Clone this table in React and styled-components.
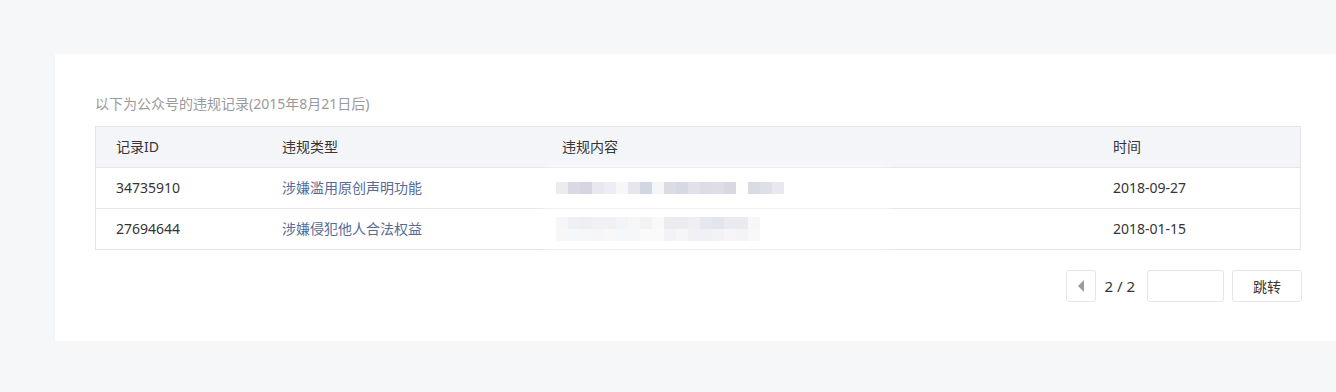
import React from "react";
import styled, { createGlobalStyle } from "styled-components";

const Global = createGlobalStyle`
  html, body { margin: 0; padding: 0; background: #f6f7f9; overflow: hidden; }
  body { font-family: "Noto Sans", "Noto Sans CJK SC", sans-serif; font-size: 14px; color: #353535; }
`;

const Page = styled.div`
  padding: 54px 0 0 55px;
`;

const Card = styled.section`
  background: #fff;
  box-shadow: 0 1px 2px rgba(0, 0, 0, 0.04);
  padding: 39px 0 39px 40px;
`;

const Title = styled.div`
  color: #9a9a9a;
  line-height: 20px;
  margin-bottom: 13px;
  padding-top: 1px;
`;

const Table = styled.div`
  width: 1206px;
  box-sizing: border-box;
  border: 1px solid #e4e6eb;
  position: relative;
  margin-top: -1px;
`;

const Row = styled.div`
  display: grid;
  grid-template-columns: 166px 280px 551px 1fr;
  height: 40px;
  align-items: center;
  background: ${(p) => (p.$head ? "#f4f5f9" : "#fff")};
  & + & { border-top: 1px solid #e4e6eb; }
`;

const Cell = styled.div`
  padding-left: 20px;
  line-height: 20px;
  color: ${(p) => (p.$link ? "#576b95" : "#353535")};
  white-space: nowrap;
`;

const Mosaic = styled.div`
  display: flex;
  flex-direction: column;
  margin-left: -6px;
`;

const MosaicLine = styled.div`
  display: flex;
  height: 12px;
`;

const Px = styled.span`
  width: 12px;
  height: 12px;
  display: block;
`;

const Haze = styled.div`
  position: absolute;
  left: 448px;
  top: 38px;
  width: 345px;
  height: 86px;
  background: rgba(255, 255, 255, 0.45);
  filter: blur(4px);
  pointer-events: none;
`;

const Pager = styled.div`
  display: flex;
  justify-content: flex-end;
  align-items: center;
  margin-top: 20px;
  width: 1207px;
  height: 32px;
`;

const PrevBtn = styled.button`
  width: 30px;
  height: 32px;
  border: 1px solid #e4e6eb;
  border-radius: 3px;
  background: #fff;
  display: flex;
  align-items: center;
  justify-content: center;
  padding: 0;
  box-sizing: border-box;
  &::before {
    content: "";
    border-style: solid;
    border-width: 6px 6px 6px 0;
    border-color: transparent #9a9a9a transparent transparent;
  }
`;

const PageNum = styled.span`
  margin: 0 12px 0 8px;
  color: #353535;
  line-height: 20px;
  font-size: 15px;
`;

const Input = styled.input`
  width: 77px;
  height: 32px;
  box-sizing: border-box;
  border: 1px solid #e4e6eb;
  border-radius: 3px;
  margin-right: 8px;
  outline: none;
`;

const JumpBtn = styled.button`
  width: 70px;
  height: 32px;
  box-sizing: border-box;
  border: 1px solid #e4e6eb;
  border-radius: 3px;
  background: #fff;
  font-family: inherit;
  font-size: 14px;
  color: #353535;
`;

const row1 = ["#dcdde3","#babbcc","#b3b5c5","#d5d8e3","#dde0e9","#f0f0f3","#d2d4dc","#a9b6cb","#eeeff4","#bbbdcf","#b6bacb","#c8cad8","#c0c2d2","#c3c4d2","#b6b8cb","#fdfdfd","#bcc0ce","#c3c6d4","#d4d7e2"];
const row2a = ["#efeff2","#e2e4ec","#e2e1e7","#e3e5ec","#e6e5ea","#e9ebf0","#f1f1f4","#e9e9ed","#f4f4f6","#dcdde3","#dbdce4","#e3e1e6","#d0d5e0","#cdd0dc","#d8dbe4","#d8dae3","#f0f0f3"];
const row2b = ["#f0f0f3","#eff0f3","#eff0f3","#eeeef2","#f3f3f5","#eff0f3","#eff0f3","#f6f6f8","#f6f6f8","#eaeaee","#efeff2","#e6e6ea","#e4e6ee","#e9eaee","#eeeff3","#ececf0","#f3f3f5"];

const Line = ({ colors }) => (
  <MosaicLine>
    {colors.map((c, i) => (
      <Px key={i} style={{ background: c }} />
    ))}
  </MosaicLine>
);

export default function App() {
  return (
    <>
      <Global />
      <Page>
        <Card>
          <Title>以下为公众号的违规记录(2015年8月21日后)</Title>
          <Table>
            <Row $head>
              <Cell>记录ID</Cell>
              <Cell>违规类型</Cell>
              <Cell>违规内容</Cell>
              <Cell>时间</Cell>
            </Row>
            <Row>
              <Cell>34735910</Cell>
              <Cell $link>涉嫌滥用原创声明功能</Cell>
              <Cell>
                <Mosaic>
                  <Line colors={row1} />
                </Mosaic>
              </Cell>
              <Cell>2018-09-27</Cell>
            </Row>
            <Row>
              <Cell>27694644</Cell>
              <Cell $link>涉嫌侵犯他人合法权益</Cell>
              <Cell>
                <Mosaic>
                  <Line colors={row2a} />
                  <Line colors={row2b} />
                </Mosaic>
              </Cell>
              <Cell>2018-01-15</Cell>
            </Row>
            <Haze />
          </Table>
          <Pager>
            <PrevBtn aria-label="上一页" />
            <PageNum>2 / 2</PageNum>
            <Input />
            <JumpBtn>跳转</JumpBtn>
          </Pager>
        </Card>
      </Page>
    </>
  );
}
